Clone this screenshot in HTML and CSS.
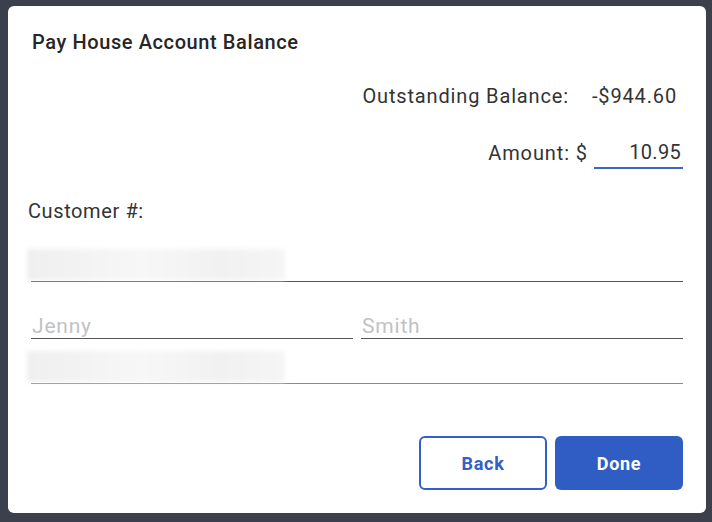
FILE: index.html
```html
<!DOCTYPE html>
<html lang="en">
<head>
  <meta charset="UTF-8">
  <title>Pay House Account Balance</title>
  <meta name="viewport" content="width=device-width, initial-scale=1.0">
  <link rel="stylesheet" href="styles.css">
</head>
<body>

  <div class="dialog">
    <h1 class="title">Pay House Account Balance</h1>

    <div class="balance-row">
      <span class="label">Outstanding Balance:</span>
      <span class="value">-$944.60</span>
    </div>

    <div class="amount-row">
      <span class="label">Amount: $</span>
      <input class="amount" type="text" value="10.95">
    </div>

    <div class="customer-label">Customer #:</div>

    <div class="field field-first">
      <div class="redacted"></div>
    </div>

    <div class="name-row">
      <input class="field name" type="text" placeholder="Jenny">
      <input class="field name" type="text" placeholder="Smith">
    </div>

    <div class="field field-last">
      <div class="redacted"></div>
    </div>

    <div class="buttons">
      <button class="btn btn-back">Back</button>
      <button class="btn btn-done">Done</button>
    </div>
  </div>

</body>
</html>
```

FILE: styles.css
```css
body {
  margin: 0;
  background: #3b404c;
  font-family: Roboto, "Liberation Sans", sans-serif;
  color: #2a2a2a;
}

.dialog {
  box-sizing: border-box;
  width: 698px;
  height: 507px;
  margin: 6px 0 0 8px;
  padding: 24px 23px 23px 20px;
  background: #fff;
  border-radius: 6px;
  display: flex;
  flex-direction: column;
}

.title {
  margin: 0 0 0 4px;
  font-size: 20px;
  font-weight: 500;
  line-height: 24px;
  letter-spacing: 0.6px;
  color: #262626;
}

.balance-row {
  display: flex;
  justify-content: flex-end;
  gap: 23px;
  margin-top: 30px;
  padding-right: 6px;
  font-size: 20px;
  line-height: 24px;
  letter-spacing: 0.85px;
  color: #333;
}

.amount-row {
  display: flex;
  justify-content: flex-end;
  align-items: center;
  gap: 6px;
  margin-top: 29px;
  font-size: 20px;
  letter-spacing: 0.9px;
  color: #333;
}

.amount {
  box-sizing: border-box;
  width: 89px;
  height: 32px;
  padding: 0 2px 0 0;
  border: none;
  border-bottom: 2px solid #3a66c8;
  outline: none;
  font-family: inherit;
  font-size: 20px;
  letter-spacing: 0.3px;
  color: #333;
  text-align: right;
}

.customer-label {
  margin-top: 30px;
  font-size: 20px;
  line-height: 24px;
  letter-spacing: 0.6px;
  color: #333;
}

.field {
  box-sizing: border-box;
  height: 33px;
  margin-left: 3px;
  border: none;
  border-bottom: 1px solid #555;
  position: relative;
}

.field-first {
  margin-top: 26px;
}

.field-last {
  margin-top: 12px;
  border-bottom-color: #8a8a8a;
}

.redacted {
  position: absolute;
  left: -4px;
  top: 0;
  width: 258px;
  height: 31px;
  background: linear-gradient(90deg, #efefef, #f7f7f7 45%, #f1f1f1 75%, #f5f5f5);
  filter: blur(2px);
}

.name-row {
  display: flex;
  gap: 8px;
  margin-top: 24px;
  margin-left: 3px;
}

.name-row .field {
  flex: 1;
  min-width: 0;
  margin-left: 0;
  padding: 8px 1px 0;
  outline: none;
  font-family: inherit;
  font-size: 21px;
  letter-spacing: 0.8px;
  color: #333;
}

.name::placeholder {
  color: #c2c2c2;
}

.buttons {
  display: flex;
  justify-content: flex-end;
  gap: 8px;
  margin-top: auto;
}

.btn {
  box-sizing: border-box;
  width: 128px;
  height: 54px;
  border-radius: 6px;
  font-family: inherit;
  font-size: 18px;
  font-weight: 700;
  letter-spacing: 0.7px;
}

.btn-back {
  background: #fff;
  border: 2px solid #3260c6;
  color: #3260c6;
}

.btn-done {
  background: #2f5dc4;
  border: none;
  color: #fff;
}
```
